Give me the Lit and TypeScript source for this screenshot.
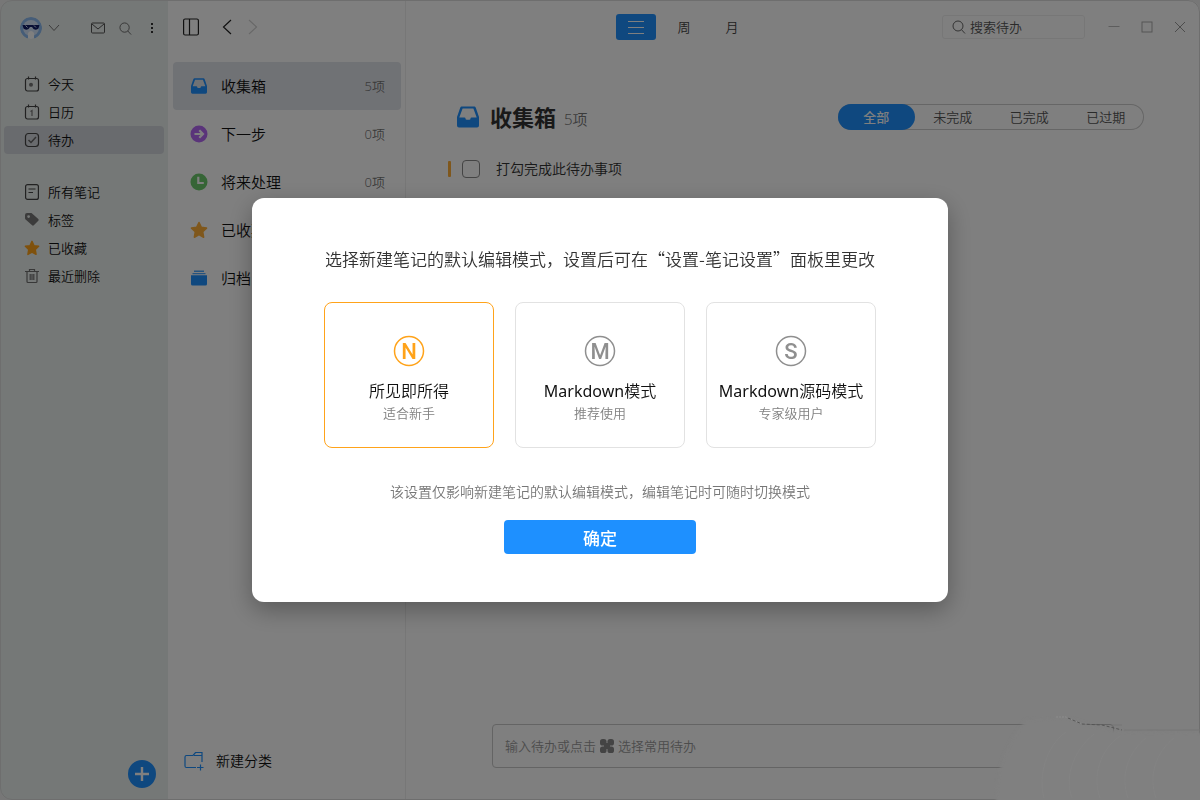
import { LitElement, html, svg, css } from "lit";
import { customElement, state } from "lit/decorators.js";

const tray = (size: number) => html`
  <svg width=${size} height=${size} viewBox="0 0 22 22" aria-hidden="true">
    <path fill="#1e90ff" fill-rule="evenodd" d="M5 0.5h12c.9 0 1.5.4 1.8 1.3L22 11v8.500q0 2-2 2H2q-2 0-2-2V11L3.200 1.800C3.500.9 4.100.5 5 .5zM5.600 2.500 2.300 11.500H7.500q1 0 1 1 0 1.300 1.300 1.300h2.400q1.300 0 1.300-1.300 0-1 1-1h5.200L16.400 2.500z"/>
  </svg>`;

const star = (size: number, color: string) => html`
  <svg width=${size} height=${size} viewBox="0 0 18 18" aria-hidden="true">
    <path fill=${color} stroke=${color} stroke-width="1.600" stroke-linejoin="round" d="M9 1.500l2.300 4.900 5.200.7-3.800 3.700.9 5.400L9 13.600l-4.600 2.600.9-5.400L1.500 7.100l5.200-.7z"/>
  </svg>`;

const lens = (size: number) => html`
  <svg width=${size} height=${size} viewBox="0 0 14 14" fill="none" stroke="#666" aria-hidden="true">
    <circle cx="6" cy="6" r="5"/><path d="M9.500 9.700 13 13.500"/>
  </svg>`;

const line = (body: unknown, color = "#444") => html`
  <svg width="16" height="16" viewBox="0 0 16 16" fill="none" stroke=${color} stroke-width="1.200" aria-hidden="true">${body}</svg>`;

const calendar = svg`<rect x="1.500" y="2.500" width="13" height="12.500" rx="2"/><path d="M4.500.5v3M11.500.5v3"/>`;

const navMain = [
  { label: "今天", icon: line(svg`${calendar}<circle cx="7" cy="8.700" r="2" fill="#777" stroke="none"/>`) },
  { label: "日历", icon: line(svg`${calendar}<path stroke="#777" d="M6.500 7.500 8 6.500v5.500"/>`) },
  { label: "待办", icon: line(svg`<rect x="1.500" y="1.500" width="13" height="13" rx="3"/><path stroke="#666" stroke-width="1.500" d="M4.500 8l2.500 2.500 5-5.500"/>`), on: true },
];

const navNotes = [
  { label: "所有笔记", icon: line(svg`<rect x="1.600" y="0.600" width="12.800" height="14.800" rx="2"/><path d="M4.500 5h7M4.500 8.500h4.500"/>`) },
  { label: "标签", icon: line(svg`<path fill="#777" stroke="none" fill-rule="evenodd" d="M1 3q0-2 2-2h4.500l6.800 6q.9.900 0 1.800l-4.500 4.500q-.8.800-1.700 0L1.600 7.500Q1 7 1 6zM4.600 3.200a1.400 1.400 0 100 2.800 1.400 1.400 0 000-2.800z"/>`) },
  { label: "已收藏", icon: star(16, "#ffa31a") },
  { label: "最近删除", icon: line(svg`<path d="M1 3.500h14M5.500 3.500v-2h5v2M3 4v9.500q0 1 1 1h8q1 0 1-1V4M6.200 6v6M8 6v6M9.800 6v6"/>`, "#707070") },
];

const lists = [
  { label: "收集箱", count: "5项", icon: tray(16), on: true },
  { label: "下一步", count: "0项", icon: html`<svg width="18" height="18" viewBox="0 0 18 18" aria-hidden="true"><circle cx="9" cy="9" r="8.500" fill="#b568f5"/><path d="M4.500 9h7M9.300 5.200 13 9l-3.700 3.800" fill="none" stroke="#fff" stroke-width="2.200"/></svg>` },
  { label: "将来处理", count: "0项", icon: html`<svg width="18" height="18" viewBox="0 0 18 18" aria-hidden="true"><circle cx="9" cy="9" r="8.500" fill="#6ccb6c"/><path d="M8.300 3.800V10h5.500" fill="none" stroke="#fff" stroke-width="2.200"/></svg>` },
  { label: "已收藏", count: "0项", icon: star(18, "#ffaf38") },
  { label: "归档", count: "0项", icon: html`<svg width="16" height="16" viewBox="0 0 16 16" fill="#1e90ff" aria-hidden="true"><path d="M3 .5h10v1.500H3zM1.500 3h13v1.300h-13z" opacity=".8"/><path d="M0 5.300h16v8.700q0 1.500-1.500 1.500h-13Q0 15.500 0 14z"/></svg>` },
];

const modes = [
  { letter: "N", latin: "", name: "所见即所得", hint: "适合新手" },
  { letter: "M", latin: "Markdown", name: "模式", hint: "推荐使用" },
  { letter: "S", latin: "Markdown", name: "源码模式", hint: "专家级用户" },
];

const base = css`
  * { box-sizing: border-box; }
  button, input, a { font: inherit; color: inherit; }
  button { background: none; border: 0; padding: 0; display: flex; align-items: center; justify-content: center; }
  a { text-decoration: none; }
  svg { display: block; flex: none; }
  h1, h2, p, ul { margin: 0; padding: 0; }
  ul { list-style: none; }
`;

@customElement("side-nav")
class SideNav extends LitElement {
  static styles = [base, css`
    :host { display: flex; flex-direction: column; width: 168px; flex: none; background: #ebf0ee; font-size: 13px; line-height: 20px; }
    .account { display: flex; align-items: center; height: 56px; padding: 0 8px 0 20px; }
    .avatar { margin-right: 6px; }
    .mail { margin: 0 14px 0 31px; }
    .more { width: 16px; margin-left: 12px; }
    .group { padding: 14px 4px 0; }
    .group + .group { padding-top: 24px; }
    .item { display: flex; align-items: center; gap: 8px; height: 28px; padding-left: 20px; border-radius: 4px; color: #111; }
    .on { background: #d3d6dc; }
    .foot { margin-top: auto; padding: 0 12px 12px; display: flex; justify-content: flex-end; }
    .add { width: 28px; height: 28px; border-radius: 50%; background: #1e90ff; }
  `];
  group(items: any[]) {
    return html`<ul class="group">${items.map(i => html`
      <li><a href="#" class="item ${i.on ? "on" : ""}">${i.icon}<span>${i.label}</span></a></li>`)}</ul>`;
  }
  render() {
    return html`
      <div class="account">
        <svg class="avatar" width="22" height="22" viewBox="0 0 22 22" aria-hidden="true">
          <defs><clipPath id="c"><circle cx="11" cy="11" r="11"/></clipPath></defs>
          <g clip-path="url(#c)">
            <circle cx="11" cy="11" r="11" fill="#8dbbf0"/>
            <circle cx="11" cy="11" r="8" fill="#d5e5fa"/>
            <path d="M8 22v-6q3-4 6 0v6z" fill="#fff"/>
            <path d="M2.500 8h17l-1 3.500q-2 2-5 .5L12 10h-2l-1.500 2q-3 1.500-5-.5z" fill="#101d68"/>
            <path d="M5.500 8.500l2 2M14 8.500l2 2" stroke="#d5e5fa"/>
          </g>
        </svg>
        <button aria-label="账户"><svg width="12" height="8" viewBox="0 0 12 8" fill="none" stroke="#777"><path d="M1 1l5 5.500L11 1"/></svg></button>
        <button class="mail" aria-label="消息"><svg width="14" height="12" viewBox="0 0 14 12" fill="none" stroke="#555"><rect x=".5" y="1" width="13" height="10" rx="1"/><path d="M1 2l6 5 6-5"/></svg></button>
        <button aria-label="搜索">${lens(13)}</button>
        <button class="more" aria-label="更多"><svg width="3" height="12" viewBox="0 0 3 12" fill="#333"><path d="M0 1h2v2H0zM0 5h2v2H0zM0 9h2v2H0z"/></svg></button>
      </div>
      ${this.group(navMain)}${this.group(navNotes)}
      <div class="foot">
        <button class="add" aria-label="新建"><svg width="16" height="16" viewBox="0 0 16 16"><path d="M8 1v14M1 8h14" stroke="#fff" stroke-width="2.400"/></svg></button>
      </div>`;
  }
}

@customElement("list-column")
class ListColumn extends LitElement {
  static styles = [base, css`
    :host { display: flex; flex-direction: column; width: 238px; flex: none; border-right: 1px solid #eee; font-size: 15px; line-height: 22px; }
    .tools { display: flex; align-items: center; height: 54px; padding-left: 15px; gap: 23px; }
    .arrows { display: flex; gap: 16px; }
    .lists { padding: 8px 4px 0 5px; }
    .row { display: flex; align-items: center; height: 48px; padding: 0 16px; border-radius: 4px; color: #111; }
    .on { background: #e1e4ea; }
    .icon { display: flex; justify-content: center; width: 20px; margin-right: 12px; }
    .count { margin-left: auto; font-size: 13px; color: #777; }
    .new { display: flex; align-items: center; justify-content: flex-start; gap: 12px; margin: auto 0 0; height: 78px; padding-left: 16px; font-size: 14px; color: #111; }
  `];
  render() {
    return html`
      <div class="tools">
        <button aria-label="侧栏"><svg width="16" height="18" viewBox="0 0 16 18" fill="none" stroke="#222" stroke-width="1.200"><rect x=".6" y="1" width="14.800" height="16" rx="1.500"/><path d="M6.500 1v16"/></svg></button>
        <div class="arrows">
          <button aria-label="后退"><svg width="10" height="16" viewBox="0 0 10 16" fill="none" stroke="#222" stroke-width="1.200"><path d="M9 1L1.500 8 9 15"/></svg></button>
          <button aria-label="前进"><svg width="10" height="16" viewBox="0 0 10 16" fill="none" stroke="#d0d0d0" stroke-width="1.200"><path d="M1 1l7.500 7L1 15"/></svg></button>
        </div>
      </div>
      <ul class="lists">${lists.map(l => html`
        <li><a href="#" class="row ${l.on ? "on" : ""}"><span class="icon">${l.icon}</span><span>${l.label}</span><span class="count">${l.count}</span></a></li>`)}
      </ul>
      <button class="new">
        <svg width="20" height="20" viewBox="0 0 20 20" fill="none" stroke="#1e90ff" stroke-width="1.200"><path d="M12 16.500H2.500q-1.500 0-1.500-1.500V6q0-1.500 1.500-1.500H9L11.500 1.500H18V11M10 4.500h8M13 16.500h6.500M16.500 13.500v6"/></svg>
        <span>新建分类</span>
      </button>`;
  }
}

@customElement("todo-pane")
class TodoPane extends LitElement {
  static styles = [base, css`
    :host { display: flex; flex-direction: column; flex: 1; min-width: 0; font-size: 14px; line-height: 20px; color: #333; }
    .bar { display: flex; align-items: center; height: 54px; padding: 0 4px 0 210px; font-size: 13px; }
    .tabs { display: flex; gap: 8px; }
    .tab { width: 40px; height: 26px; border-radius: 3px; color: #444; }
    .active { background: #1e90ff; color: #fff; }
    .search { display: flex; align-items: center; gap: 4px; width: 143px; height: 24px; margin: 0 12px 0 auto; padding-left: 9px; border: 1px solid #eee; border-radius: 3px; }
    .field { width: 100%; min-width: 0; border: 0; padding: 0; background: none; outline: 0; }
    .field::placeholder { color: #555; opacity: 1; }
    .win { width: 33px; height: 24px; }
    .head { display: flex; align-items: center; height: 30px; margin: 48px 56px 0 51px; }
    .title { margin: 0 8px 0 11px; font-size: 22px; line-height: 30px; font-weight: 700; color: #333; }
    .total { font-size: 15px; line-height: 22px; padding-top: 4px; color: #777; }
    .filter { display: flex; width: 306px; height: 26px; margin-left: auto; border-radius: 13px; box-shadow: inset 0 0 0 1px #ccc; font-size: 13px; }
    .chip { flex: 1; border-radius: 13px; color: #555; }
    .chip.active { color: #fff; font-weight: 500; }
    .task { display: flex; align-items: center; height: 24px; margin: 25px 42px 0; }
    .mark { width: 3px; height: 16px; border-radius: 1px; background: #ffaf38; }
    .tick { appearance: none; width: 18px; height: 18px; margin: 0 16px 0 11px; border: 1px solid #888; border-radius: 4px; }
    .compose { display: grid; margin: auto 86px 32px; height: 44px; border: 1px solid #c8c8c8; border-radius: 4px; font-size: 13px; color: #999; }
    .compose > * { grid-area: 1 / 1; }
    .hint { display: flex; align-items: center; gap: 4px; padding-left: 12px; }
    .entry { width: 100%; border: 0; background: none; padding: 0 12px; }
  `];
  render() {
    return html`
      <div class="bar">
        <div class="tabs">
          <button class="tab active" aria-label="列表"><svg width="16" height="14" viewBox="0 0 16 14" stroke="#fff"><path d="M0 1.500h16M0 7.500h16M0 13.500h16"/></svg></button>
          <button class="tab">周</button>
          <button class="tab">月</button>
        </div>
        <label class="search">${lens(14)}<input class="field" aria-label="搜索待办" placeholder="搜索待办"></label>
        <button class="win" aria-label="最小化"><svg width="12" height="12" stroke="#bbb"><path d="M0.500 5.500h11"/></svg></button>
        <button class="win" aria-label="最大化"><svg width="12" height="12" fill="none" stroke="#aaa"><rect x="1" y="1" width="10" height="10"/></svg></button>
        <button class="win" aria-label="关闭"><svg width="12" height="12" stroke="#999"><path d="M1 1l10 10M11 1L1 11"/></svg></button>
      </div>
      <div class="head">
        ${tray(22)}
        <h1 class="title">收集箱</h1><span class="total">5项</span>
        <div class="filter">
          ${["全部", "未完成", "已完成", "已过期"].map((t, i) => html`<button class="chip ${i ? "" : "active"}">${t}</button>`)}
        </div>
      </div>
      <div class="task">
        <span class="mark"></span>
        <input class="tick" type="checkbox" id="t1"><label for="t1">打勾完成此待办事项</label>
      </div>
      <div class="compose">
        <label class="hint" for="entry">输入待办或点击
          <svg width="14" height="14" viewBox="0 0 14 14" fill="#888" aria-hidden="true"><rect width="6.500" height="6.500" rx="2.600"/><rect x="7.500" width="6.500" height="6.500" rx="2.600"/><rect y="7.500" width="6.500" height="6.500" rx="2.600"/><rect x="7.500" y="7.500" width="6.500" height="6.500" rx="2.600"/><path d="M4 4h6v6H4z"/></svg>
          选择常用待办</label>
        <input class="entry" id="entry">
      </div>`;
  }
}

@customElement("mode-dialog")
class ModeDialog extends LitElement {
  @state() picked = 0;
  static styles = [base, css`
    :host { display: flex; flex-direction: column; align-items: center; width: 696px; padding: 48px 72px; background: #fff; border-radius: 12px; box-shadow: 0 8px 24px rgba(0, 0, 0, .3); }
    .title { font: 350 17px/26px "Noto Sans CJK SC", sans-serif; color: #333; white-space: nowrap; }
    .cards { display: flex; gap: 21px; width: 100%; margin: 30px 0 33px; }
    .card { display: flex; flex-direction: column; align-items: center; flex: 1; height: 146px; padding-top: 32px; border: 1px solid #e2e2e2; border-radius: 8px; white-space: nowrap; color: #8f8f8f; }
    .card.on { border-color: #ffa31a; color: #ffa31a; }
    .radio { appearance: none; margin: 0; width: 0; height: 0; }
    .letter { font: 500 22px Roboto, sans-serif; text-anchor: middle; fill: currentColor; }
    .name { margin-top: 12px; font-size: 16px; line-height: 24px; color: #111; }
    .latin { font-weight: 400; }
    .hint { font-size: 13px; line-height: 20px; color: #808080; }
    .note { font-size: 14px; line-height: 22px; color: #777; white-space: nowrap; }
    .ok { width: 192px; height: 34px; margin: 17px 0 0; border-radius: 4px; background: #1e90ff; color: #fff; font-size: 17px; font-weight: 500; }
  `];
  render() {
    return html`
      <h2 class="title">选择新建笔记的默认编辑模式，设置后可在“设置-笔记设置”面板里更改</h2>
      <div class="cards" role="radiogroup">
        ${modes.map((m, i) => html`
          <label class="card ${i === this.picked ? "on" : ""}">
            <input class="radio" type="radio" name="mode" .checked=${i === this.picked} @change=${() => (this.picked = i)}>
            <svg width="32" height="32" viewBox="0 0 32 32" aria-hidden="true">
              <circle cx="16" cy="16" r="14.500" fill="none" stroke="currentColor" stroke-width="1.500"/>
              <text class="letter" x="16" y="24">${m.letter}</text>
            </svg>
            <span class="name"><span class="latin">${m.latin}</span>${m.name}</span>
            <span class="hint">${m.hint}</span>
          </label>`)}
      </div>
      <p class="note">该设置仅影响新建笔记的默认编辑模式，编辑笔记时可随时切换模式</p>
      <button class="ok">确定</button>`;
  }
}

@customElement("app-root")
class AppRoot extends LitElement {
  static styles = [base, css`
    :host { display: block; font-family: "Noto Sans", "Noto Sans CJK SC", sans-serif; font-weight: 350; background: #eee; }
    .window { display: flex; height: 100vh; min-height: 640px; outline: 1px solid #dcdcdc; outline-offset: -1px; border-radius: 12px; overflow: hidden; background: #fff; }
    .veil { position: fixed; inset: 0; display: flex; align-items: center; justify-content: center; background: rgba(0, 0, 0, .5); }
    .smudge { position: fixed; right: 0; bottom: 0; }
  `];
  render() {
    return html`
      <div class="window">
        <side-nav></side-nav>
        <list-column></list-column>
        <todo-pane></todo-pane>
      </div>
      <div class="veil"><mode-dialog role="dialog" aria-modal="true"></mode-dialog></div>
      <svg class="smudge" width="206" height="84" viewBox="0 0 206 84" fill="none" aria-hidden="true">
        <defs><filter id="b"><feGaussianBlur stdDeviation="1.500"/></filter></defs>
        <path filter="url(#b)" fill="#808080" d="M2 88C2 50 14 26 32 4L72 1 98 10 130 16 210 17v71z"/>
        <path stroke="#8c8c8c" stroke-dasharray="2 1" d="M62 1l10 0 16 7"/>
        <path stroke="#555" stroke-dasharray="3 2" d="M74 2l14 6 20 1 20 5"/>
        <path stroke="#777" d="M118 9h10M130 14h76"/>
        <path stroke="#8a8a8a" stroke-opacity=".25" d="M50 82C44 60 52 30 72 16M78 82C70 60 80 34 100 18M106 82c-8-22 0-48 20-62M134 82c-8-22 0-46 18-60M162 82c-8-22 0-46 18-60"/>
      </svg>`;
  }
}
